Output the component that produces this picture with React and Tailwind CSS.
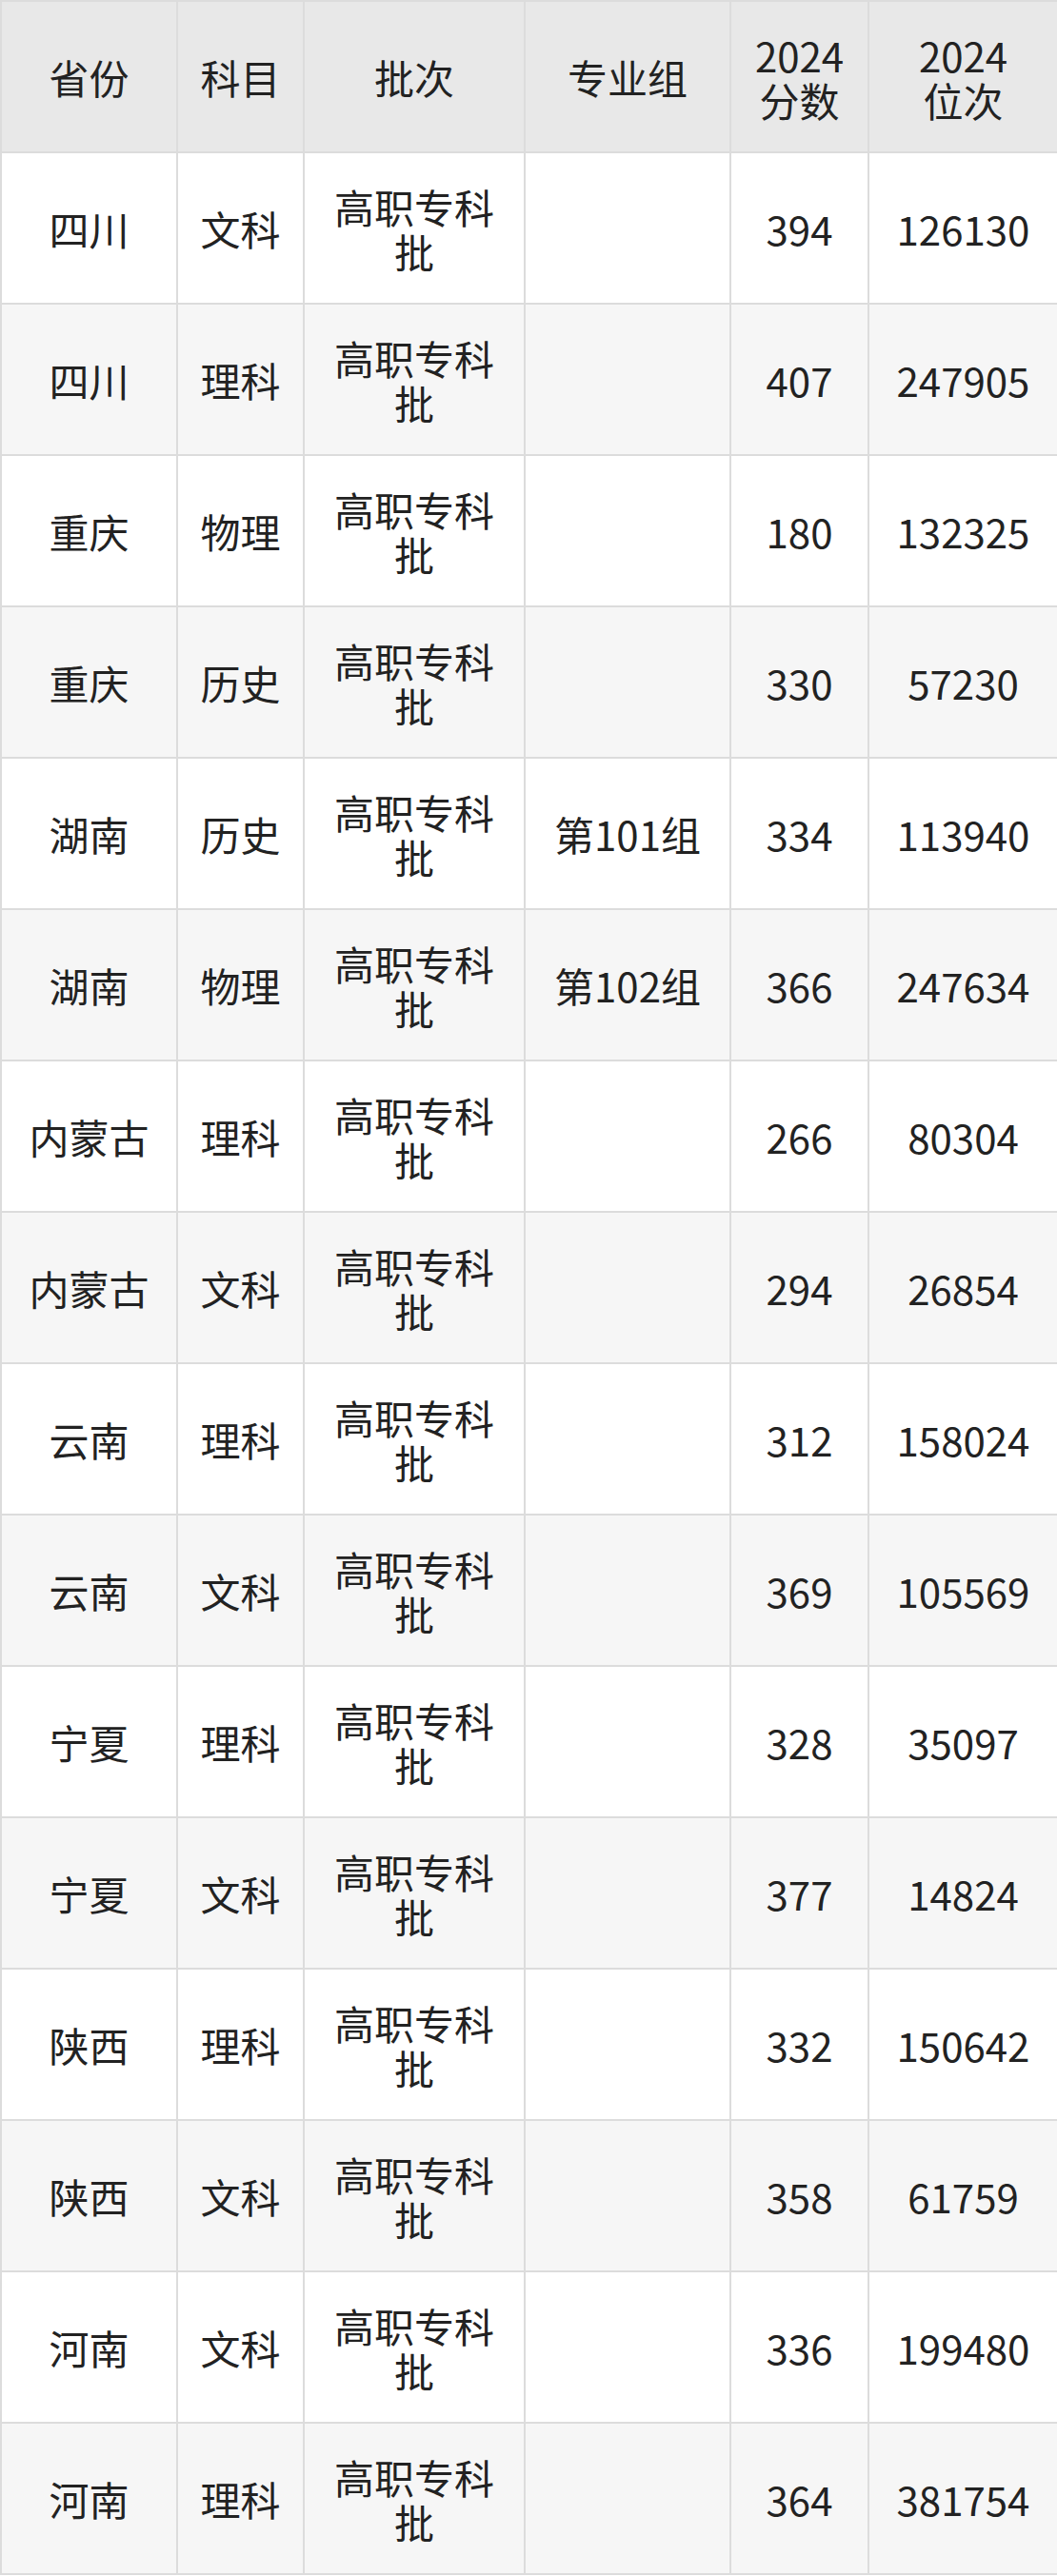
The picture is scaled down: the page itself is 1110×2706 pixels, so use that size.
import React from "react";

const rows = [
	["四川", "文科", "", "394", "126130"],
	["四川", "理科", "", "407", "247905"],
	["重庆", "物理", "", "180", "132325"],
	["重庆", "历史", "", "330", "57230"],
	["湖南", "历史", "第101组", "334", "113940"],
	["湖南", "物理", "第102组", "366", "247634"],
	["内蒙古", "理科", "", "266", "80304"],
	["内蒙古", "文科", "", "294", "26854"],
	["云南", "理科", "", "312", "158024"],
	["云南", "文科", "", "369", "105569"],
	["宁夏", "理科", "", "328", "35097"],
	["宁夏", "文科", "", "377", "14824"],
	["陕西", "理科", "", "332", "150642"],
	["陕西", "文科", "", "358", "61759"],
	["河南", "文科", "", "336", "199480"],
	["河南", "理科", "", "364", "381754"],
];

const cell = "border-2 border-[#dcdcdc] text-center align-middle p-0";

export default function App() {
	return (
		<div className="w-[1110px] bg-white font-['Noto_Sans_CJK_SC','Noto_Sans',sans-serif] text-[#222222] text-[42px] leading-[47px]">
			<table className="w-full table-fixed border-collapse">
				<colgroup>
					<col className="w-[185px]" />
					<col className="w-[133px]" />
					<col className="w-[232px]" />
					<col className="w-[216px]" />
					<col className="w-[145px]" />
					<col className="w-[199px]" />
				</colgroup>
				<thead>
					<tr className="h-[159px] bg-[#e8e8e8]">
						<th className={`${cell} font-normal`}>省份</th>
						<th className={`${cell} font-normal`}>科目</th>
						<th className={`${cell} font-normal`}>批次</th>
						<th className={`${cell} font-normal`}>专业组</th>
						<th className={`${cell} font-normal`}>2024<br />分数</th>
						<th className={`${cell} font-normal`}>2024<br />位次</th>
					</tr>
				</thead>
				<tbody>
					{rows.map((r, i) => (
						<tr key={i} className={`h-[159px] ${i % 2 === 1 ? "bg-[#f6f6f6]" : "bg-white"}`}>
							<td className={cell}>{r[0]}</td>
							<td className={cell}>{r[1]}</td>
							<td className={cell}>高职专科<br />批</td>
							<td className={cell}>{r[2]}</td>
							<td className={cell}>{r[3]}</td>
							<td className={cell}>{r[4]}</td>
						</tr>
					))}
				</tbody>
			</table>
		</div>
	);
}
